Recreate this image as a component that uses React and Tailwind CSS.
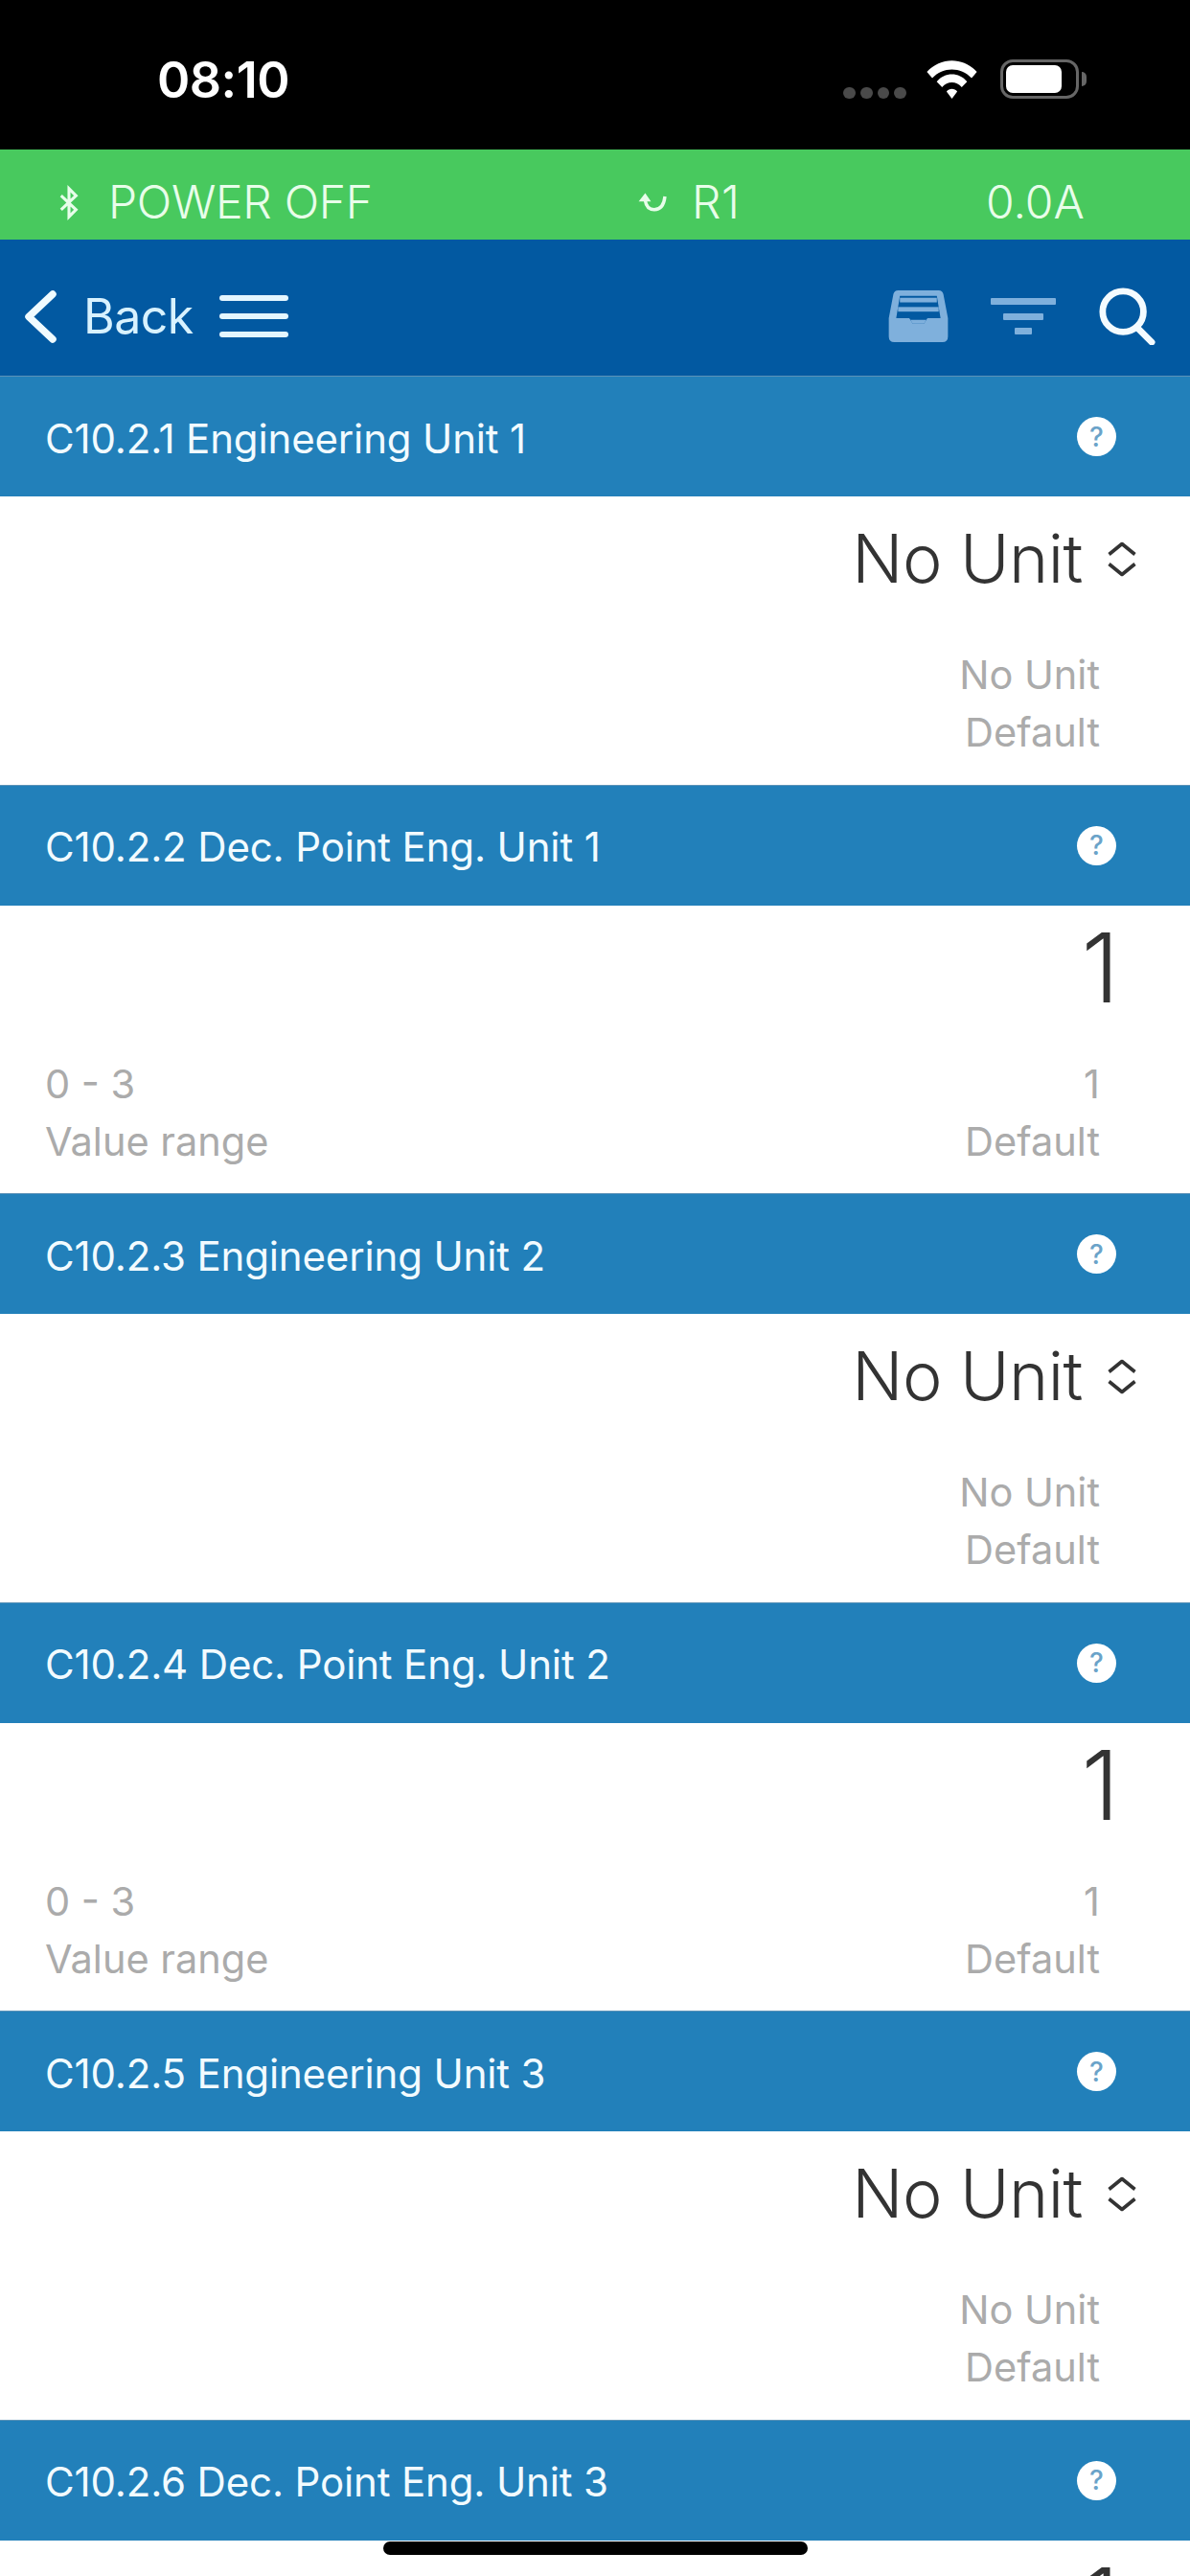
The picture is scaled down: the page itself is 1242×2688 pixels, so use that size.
import React from "react";

const sans = "font-['Inter','Noto_Sans',sans-serif]";

function Section({ title, number }) {
  return (
    <section className="h-[426.6px] shrink-0">
      <div className="h-[126px] bg-[#2280ba] flex items-center justify-between pl-[47px] pr-[77px] border-t border-[#5c93b8]">
        <span className="pt-[4px] text-[#f2fbff] text-[42px] leading-none font-normal tracking-[-0.15px] whitespace-nowrap">{title}</span>
        <span className="w-[41px] h-[41px] rounded-full bg-white flex items-center justify-center text-[#6aa3c9] text-[28px] font-medium leading-none">?</span>
      </div>
      <div className="h-[300.6px] bg-white flex flex-col pl-[47px] pr-[94px]">
        <div className="h-[130px] flex items-center justify-end">
          {number ? (
            <span className="text-[#333] text-[100px] leading-none font-light -mr-[20px]">1</span>
          ) : (
            <div className="flex items-center -mr-[39px] gap-[25px]">
              <span className="text-[#333] text-[70px] leading-none font-light tracking-[-0.5px]">No Unit</span>
              <svg width="32" height="37" viewBox="0 0 32 37" fill="none" stroke="#333" strokeWidth="3.6" strokeLinejoin="round"><path d="M2.5 13.5 16 2.5 29.500 13.500" /><path d="M2.500 23.500 16 34.500 29.500 23.500" /></svg>
            </div>
          )}
        </div>
        <div className="flex justify-between text-[#ababab] text-[41.5px] leading-[60px] mt-[26px] font-normal">
          <div>
            {number && <div>0 - 3</div>}
            {number && <div>Value range</div>}
          </div>
          <div className="text-right">
            <div>{number ? "1" : "No Unit"}</div>
            <div>Default</div>
          </div>
        </div>
      </div>
    </section>
  );
}

export default function App() {
  return (
    <div className={`relative w-[1242px] h-[2688px] overflow-hidden bg-white ${sans}`}>
      <header className="h-[156px] bg-black flex items-start justify-between">
        <span className="ml-[164px] mt-[58px] text-white text-[52px] leading-[52px] font-semibold tracking-[-0.5px]">08:10</span>
        <div className="flex items-start mt-[62px] mr-[108px]">
          <div className="flex gap-[5px] mt-[29px] mr-[19px]">
            {[0, 1, 2, 3].map((i) => (
              <span key={i} className="w-[12.750px] h-[12px] rounded-full bg-[#4a4a4a]" />
            ))}
          </div>
          <svg width="57" height="41" viewBox="0 0 58 44" fill="white">
            <path d="M1 14C16-3 42-3 57 14L51 21C39 8 19 8 7 21Z" />
            <path d="M12 25C21 14 37 14 46 25L40 31C34 24 24 24 18 31Z" />
            <path d="M23 36C26 32 32 32 35 36L29 44Z" />
          </svg>
          <div className="relative ml-[22px] mr-[8px] w-[82px] h-[41px] rounded-[13px] border-[3px] border-[#666] p-[3px]">
            <div className="w-[58px] h-full rounded-[7px] bg-white" />
            <span className="absolute -right-[11px] top-[10px] w-[5px] h-[15px] rounded-r-full bg-[#666]" />
          </div>
        </div>
      </header>

      <div className="h-[94px] pt-[16px] bg-[#48c95e] text-[#e8fdea] text-[48px] leading-none font-light flex items-center">
        <svg className="ml-[61px] shrink-0" width="22" height="37" viewBox="0 0 24 38" fill="none" stroke="#e8fdea" strokeWidth="3.4"><path d="M3 11 20 27 12 35V3l8 8L3 27" /></svg>
        <span className="ml-[30px] w-[552px] shrink-0 tracking-[-0.3px]">POWER OFF</span>
        <svg className="shrink-0" width="34" height="24" viewBox="0 0 36 28" fill="none" stroke="#e8fdea" strokeWidth="4"><path d="M32 7C31 16 27 23 19 23 13 23 9 19 8 12" /><path d="M0 13 8 3 15 13Z" fill="#e8fdea" stroke="none" /></svg>
        <span className="ml-[23px] w-[307px] shrink-0 tracking-[0.5px]">R1</span>
        <span>0.0A</span>
      </div>

      <nav className="h-[142px] pt-[18px] bg-[#0259a1] flex items-center">
        <svg className="ml-[26px] shrink-0" width="33" height="55" viewBox="0 0 33 55" fill="none" stroke="#f0fbff" strokeWidth="7.5" strokeLinecap="round" strokeLinejoin="round"><path d="M29 4 4 27.500 29 51" /></svg>
        <span className="ml-[28px] w-[142px] shrink-0 text-[#d8f2ff] text-[50px] leading-none font-normal tracking-[-0.5px]">Back</span>
        <div className="w-[72px] shrink-0 flex flex-col gap-[13px]">
          <span className="h-[6px] rounded-full bg-[#e4f6ff]" />
          <span className="h-[6px] rounded-full bg-[#e4f6ff]" />
          <span className="h-[6px] rounded-full bg-[#e4f6ff]" />
        </div>
        <svg className="ml-[626px] shrink-0" width="63" height="54" viewBox="0 0 64 56" fill="#7fb0dc">
          <path fillRule="evenodd" d="M10 0H54Q58 0 59 4L64 30V50Q64 56 58 56H6Q0 56 0 50V30L5 4Q6 0 10 0ZM8 30H22L26 36H38L42 30H56L52 6H12Z" />
          <rect x="12" y="8" width="40" height="5" /><rect x="10" y="18" width="44" height="5" />
          <path d="M8 30H22L26 36H38L42 30H56V32H8Z" />
        </svg>
        <svg className="ml-[44px] shrink-0" width="68" height="38" viewBox="0 0 68 38" fill="#7fb0dc">
          <rect x="0" y="0" width="68" height="7" rx="1" /><rect x="13" y="16" width="42" height="7" rx="1" /><rect x="25" y="31" width="18" height="7" rx="1" />
        </svg>
        <svg className="ml-[44px] shrink-0" width="60" height="60" viewBox="0 0 60 62" fill="none" stroke="#f4fbff" strokeWidth="7" strokeLinecap="round"><circle cx="26" cy="26" r="22" /><path d="M41 43 57 59" /></svg>
      </nav>

      <main className="flex flex-col">
        <Section title="C10.2.1 Engineering Unit 1" />
        <Section title="C10.2.2 Dec. Point Eng. Unit 1" number />
        <Section title="C10.2.3 Engineering Unit 2" />
        <Section title="C10.2.4 Dec. Point Eng. Unit 2" number />
        <Section title="C10.2.5 Engineering Unit 3" />
        <Section title="C10.2.6 Dec. Point Eng. Unit 3" number />
      </main>

      <div className="absolute left-[400px] bottom-[22px] w-[443px] h-[14px] rounded-full bg-black" />
    </div>
  );
}
